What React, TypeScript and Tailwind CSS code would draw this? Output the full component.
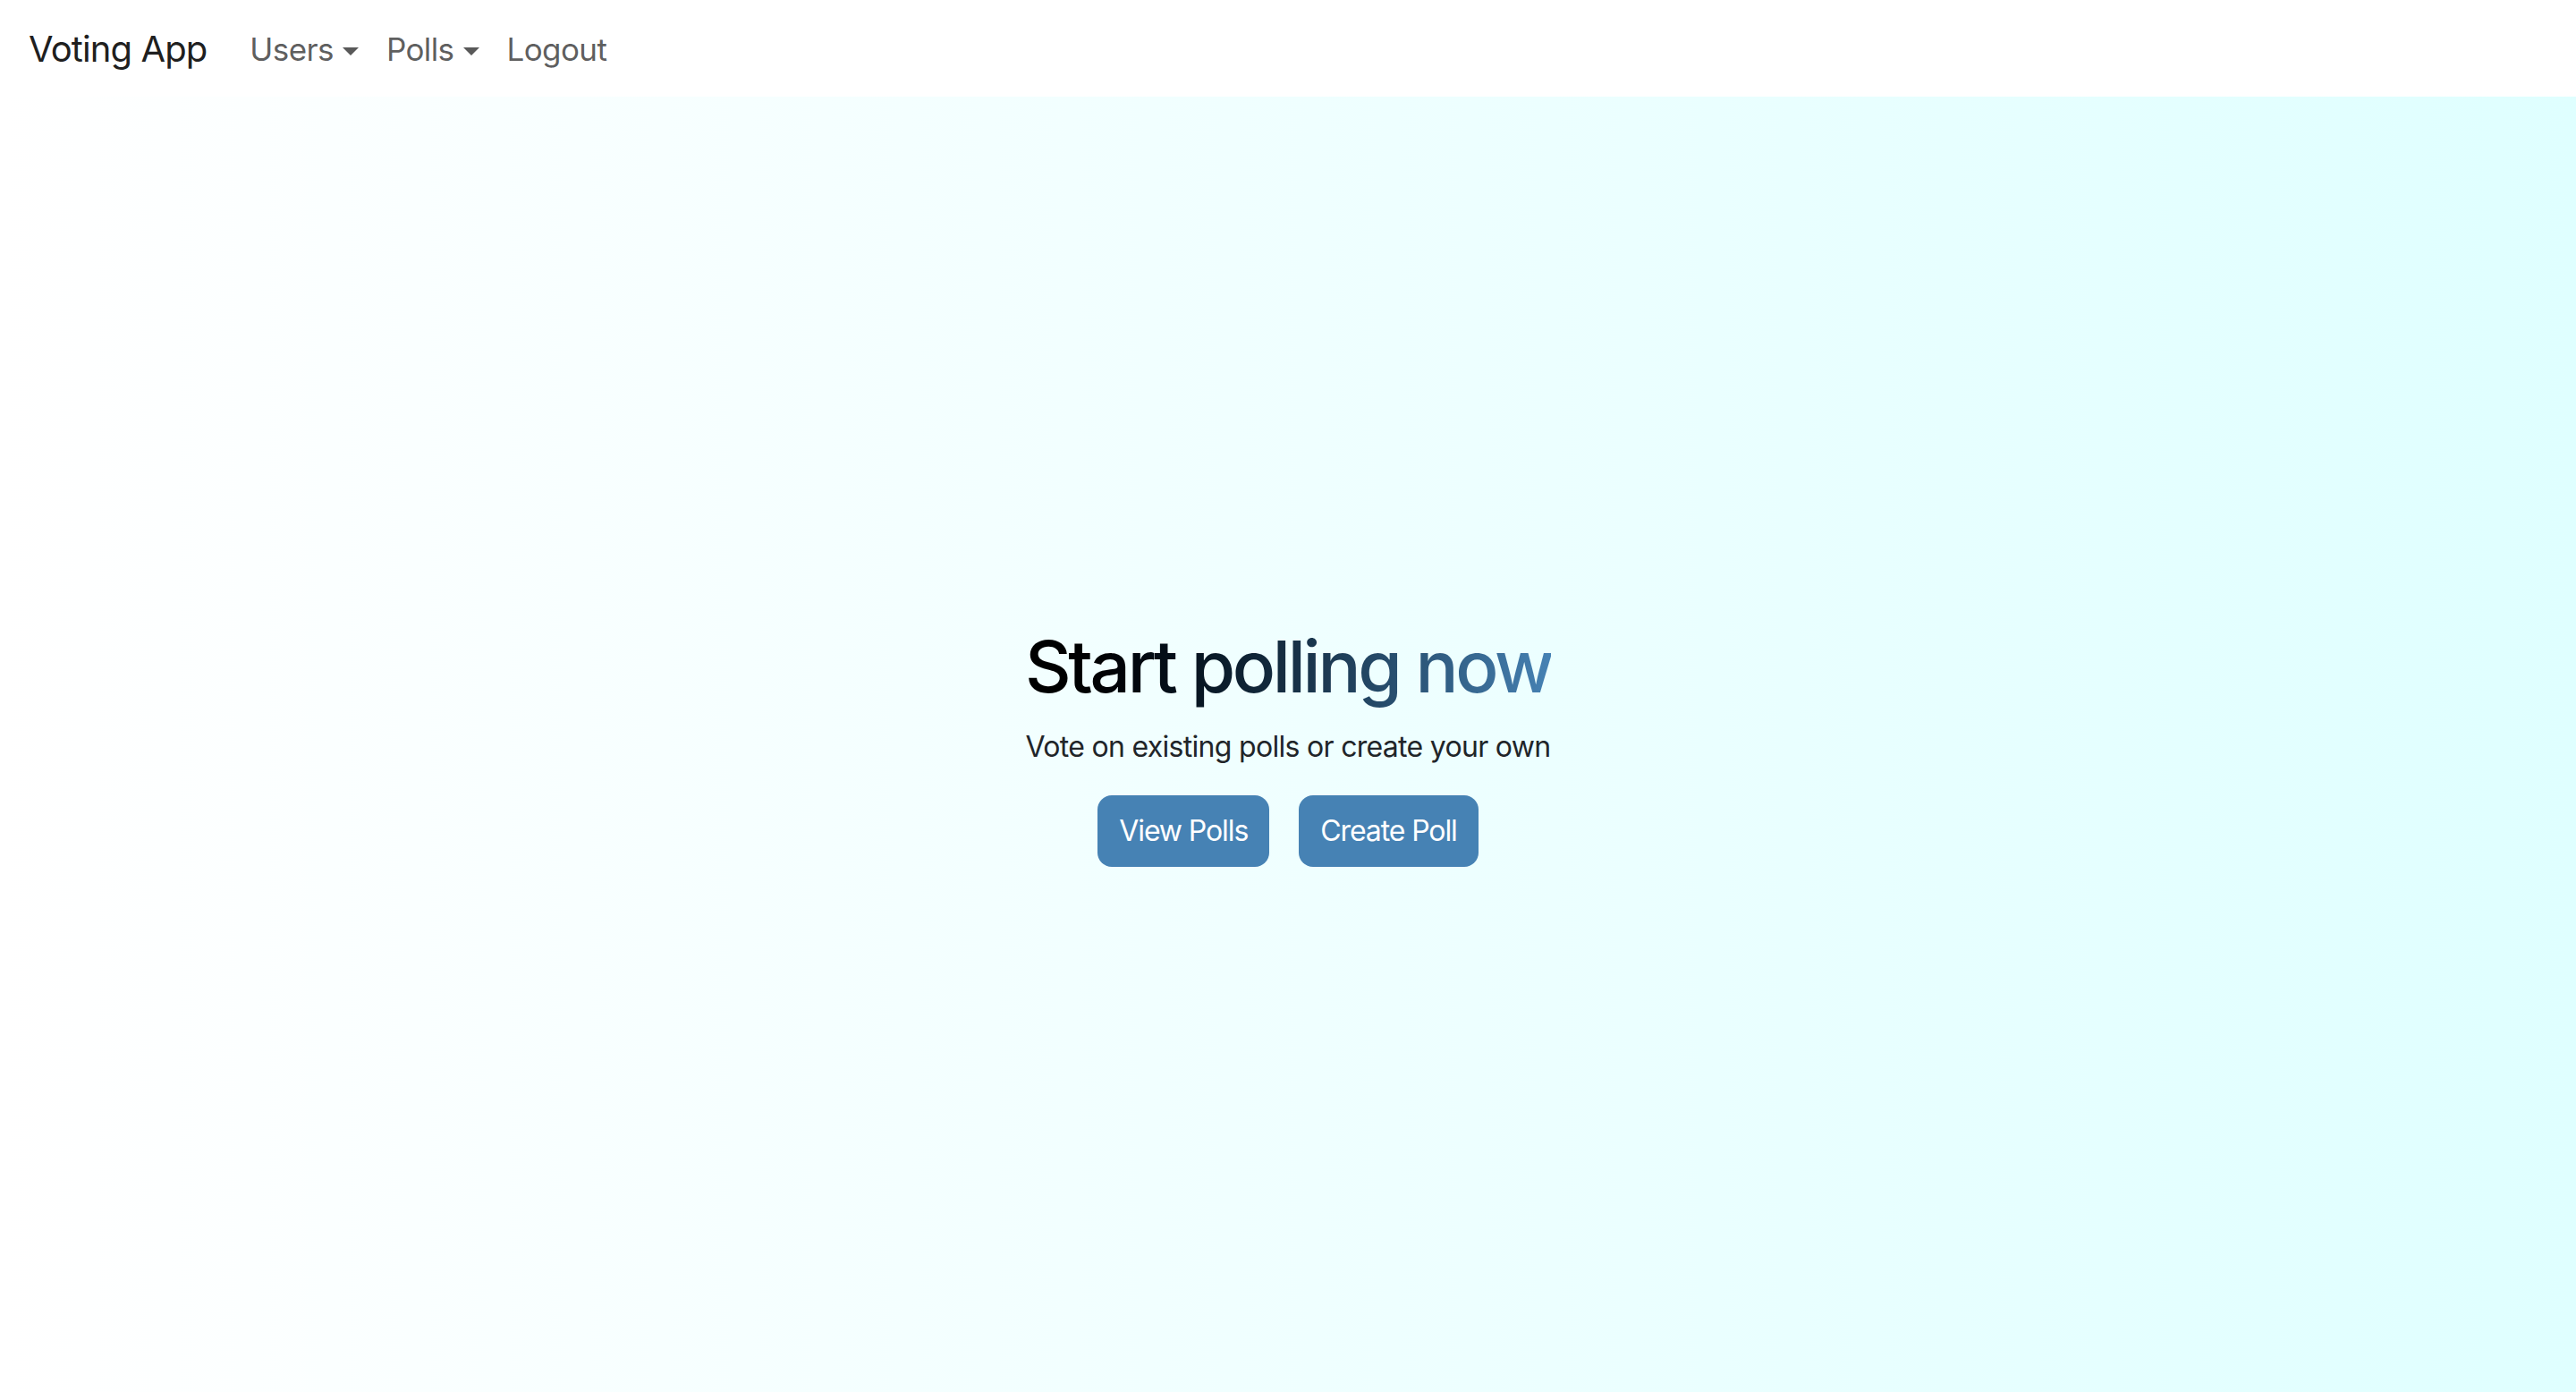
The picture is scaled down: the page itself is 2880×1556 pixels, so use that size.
export default function App() {
  return (
    <div className="min-h-screen flex flex-col font-['Inter',sans-serif]">
      {/* Navbar */}
      <nav className="h-[108px] shrink-0 bg-white flex items-center pl-[32px] pt-[2px]">
        <a className="text-[40px] text-black/90 mr-[48px] tracking-[-0.9px]">Voting App</a>
        <ul className="flex items-center gap-[31px] text-[35px] text-black/65 tracking-[-0.6px]">
          <li className="flex items-center">
            Users
            <span className="ml-[10px] mt-[4px] w-0 h-0 border-l-[9px] border-r-[9px] border-t-[9px] border-l-transparent border-r-transparent border-t-[#595959]" />
          </li>
          <li className="flex items-center">
            Polls
            <span className="ml-[10px] mt-[4px] w-0 h-0 border-l-[9px] border-r-[9px] border-t-[9px] border-l-transparent border-r-transparent border-t-[#595959]" />
          </li>
          <li>Logout</li>
        </ul>
      </nav>

      {/* Hero */}
      <main className="flex-1 bg-gradient-to-r from-white to-[#dfffff] flex flex-col items-center justify-center pt-[2px]">
        <h1 className="text-[80px] leading-[96px] font-medium tracking-[-3.3px] bg-gradient-to-r from-black to-[#4682b4] bg-clip-text text-transparent">
          Start polling now
        </h1>
        <p className="mt-[18px] text-[32px] leading-[48px] text-[#212529] tracking-[-0.7px]">
          Vote on existing polls or create your own
        </p>
        <div className="mt-[30px] flex gap-[33px]">
          <button className="h-[80px] px-[24px] rounded-[16px] bg-[#4682b4] text-white text-[32px] tracking-[-1.1px]">
            View Polls
          </button>
          <button className="h-[80px] px-[24px] rounded-[16px] bg-[#4682b4] text-white text-[32px] tracking-[-1.1px]">
            Create Poll
          </button>
        </div>
      </main>
    </div>
  );
}
